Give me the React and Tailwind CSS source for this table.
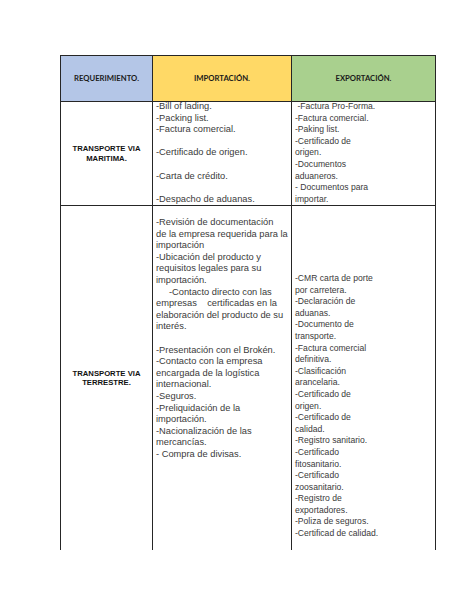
const importMaritima = [
  "-Bill of lading.",
  "-Packing list.",
  "-Factura comercial.",
  "",
  "-Certificado de origen.",
  "",
  "-Carta de crédito.",
  "",
  "-Despacho de aduanas.",
];

const exportMaritima = [
  " -Factura Pro-Forma.",
  "-Factura comercial.",
  "-Paking list.",
  "-Certificado de",
  "origen.",
  "-Documentos",
  "aduaneros.",
  "- Documentos para",
  "importar.",
];

const importTerrestre = [
  "-Revisión de documentación",
  "de la empresa requerida para la",
  "importación",
  "-Ubicación del producto y",
  "requisitos legales para su",
  "importación.",
  "     -Contacto directo con las",
  "empresas    certificadas en la",
  "elaboración del producto de su",
  "interés.",
  "",
  "-Presentación con el Brokén.",
  "-Contacto con la empresa",
  "encargada de la logística",
  "internacional.",
  "-Seguros.",
  "-Preliquidación de la",
  "importación.",
  "-Nacionalización de las",
  "mercancías.",
  "- Compra de divisas.",
];

const exportTerrestre = [
  "-CMR carta de porte",
  "por carretera.",
  "-Declaración de",
  "aduanas.",
  "-Documento de",
  "transporte.",
  "-Factura comercial",
  "definitiva.",
  "-Clasificación",
  "arancelaria.",
  "-Certificado de",
  "origen.",
  "-Certificado de",
  "calidad.",
  "-Registro sanitario.",
  "-Certificado",
  "fitosanitario.",
  "-Certificado",
  "zoosanitario.",
  "-Registro de",
  "exportadores.",
  "-Poliza de seguros.",
  "-Certificad de calidad.",
];

const Lines = ({ items, className }) => (
  <div className={className}>
    {items.map((t, i) => (
      <div key={i} className="whitespace-pre h-[11.6px] leading-[11.6px]">{t || "\u00a0"}</div>
    ))}
  </div>
);

const Label = ({ children }) => (
  <div className="text-center font-bold text-[7.7px] leading-[9.5px] text-[#111] [font-family:'Liberation_Sans',Arial,sans-serif]">
    {children}
  </div>
);

export default function App() {
  return (
    <div className="w-[474px] h-[613px] bg-white pt-[55px] pl-[60px] overflow-hidden [font-family:'Liberation_Sans',Arial,sans-serif] text-[#3a3a3a]">
      <div className="grid grid-cols-[92px_139px_145px]">
        {/* header */}
        <div className="h-[46px] bg-[#b4c6e7] border-l border-t border-[#262626] flex items-center justify-center text-[7.7px] font-bold text-[#1a1a1a] [font-family:Lato,sans-serif]">
          REQUERIMIENTO.
        </div>
        <div className="h-[46px] bg-[#ffd966] border-l border-t border-[#262626] flex items-center justify-center text-[7.7px] font-bold text-[#1a1a1a] [font-family:Lato,sans-serif]">
          IMPORTACIÓN.
        </div>
        <div className="h-[46px] bg-[#a9d08e] border-l border-r border-t border-[#262626] flex items-center justify-center text-[7.7px] font-bold text-[#1a1a1a] [font-family:Lato,sans-serif]">
          EXPORTACIÓN.
        </div>

        {/* maritima */}
        <div className="h-[104px] border-l border-t border-[#262626] flex flex-col items-center justify-center">
          <Label>TRANSPORTE VIA</Label>
          <Label>MARITIMA.</Label>
        </div>
        <div className="h-[104px] border-l border-t border-[#262626] pl-[3px]">
          <Lines items={importMaritima} className="text-[9.3px] -mt-[1px]" />
        </div>
        <div className="h-[104px] border-l border-r border-t border-[#262626] pl-[3px]">
          <Lines items={exportMaritima} className="text-[8.6px] -mt-[1px]" />
        </div>

        {/* terrestre */}
        <div className="h-[345px] border-l border-t border-[#262626] flex flex-col items-center justify-center">
          <Label>TRANSPORTE VIA</Label>
          <Label>TERRESTRE.</Label>
        </div>
        <div className="h-[345px] border-l border-t border-[#262626] pl-[3px] pt-[11px]">
          <Lines items={importTerrestre} className="text-[9.3px]" />
        </div>
        <div className="h-[345px] border-l border-r border-t border-[#262626] pl-[3px] pt-[67px]">
          <Lines items={exportTerrestre} className="text-[8.6px]" />
        </div>
      </div>
    </div>
  );
}
